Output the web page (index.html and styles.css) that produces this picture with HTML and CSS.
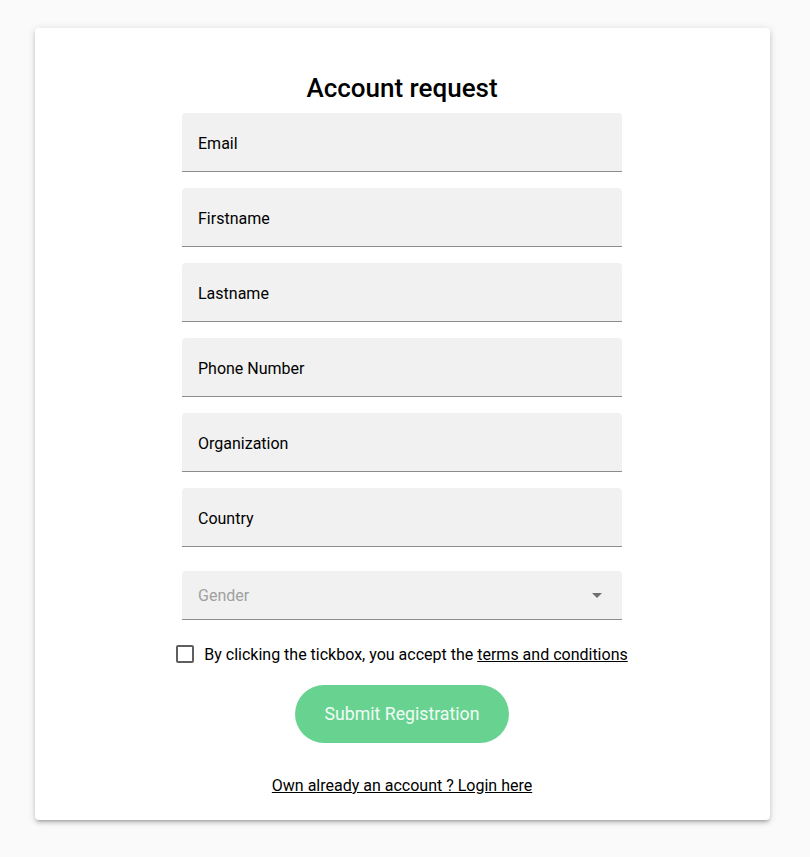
FILE: index.html
```html
<!DOCTYPE html>
<html lang="en">
<head>
<meta charset="utf-8">
<title>Account request</title>
<link rel="stylesheet" href="styles.css">
</head>
<body>
<main class="page">
  <section class="card">
    <h1 class="title">Account request</h1>
    <form class="form">
      <label class="field"><span class="field-label">Email</span></label>
      <label class="field"><span class="field-label">Firstname</span></label>
      <label class="field"><span class="field-label">Lastname</span></label>
      <label class="field"><span class="field-label">Phone Number</span></label>
      <label class="field"><span class="field-label">Organization</span></label>
      <label class="field"><span class="field-label">Country</span></label>
      <div class="field select">
        <span class="placeholder">Gender</span>
        <span class="arrow"></span>
      </div>
    </form>
    <div class="terms">
      <span class="checkbox"></span>
      <span class="terms-text">By clicking the tickbox, you accept the <a href="#" class="link">terms and conditions</a></span>
    </div>
    <button class="submit" type="button">Submit Registration</button>
    <a href="#" class="login link">Own already an account ? Login here</a>
  </section>
</main>
</body>
</html>
```

FILE: styles.css
```css
* { box-sizing: border-box; }
html, body {
  margin: 0;
  padding: 0;
  background: #fafafa;
  font-family: Roboto, "Liberation Sans", Arial, sans-serif;
  color: #000;
}
.page {
  padding: 28px 41px 37px 35px;
}
.card {
  width: 735px;
  height: 792px;
  background: #fff;
  border-radius: 4px;
  box-shadow: 0 3px 3px -2px rgba(0,0,0,0.2), 0 3px 4px 0 rgba(0,0,0,0.14), 0 1px 8px 0 rgba(0,0,0,0.12);
  display: flex;
  flex-direction: column;
  align-items: center;
  padding: 44px 1px 0 0;
}
.title {
  margin: 0 0 9px;
  font-size: 26px;
  line-height: 32px;
  font-weight: 500;
}
.form {
  width: 440px;
  display: flex;
  flex-direction: column;
  gap: 16px;
}
.field {
  display: flex;
  align-items: center;
  height: 59px;
  padding: 0 16px;
  background: #f1f1f1;
  border-radius: 4px 4px 0 0;
  border-bottom: 1px solid #8c8c8c;
  font-size: 16px;
}
.field-label { padding-top: 3px; }
.select {
  margin-top: 8px;
  height: 49px;
  justify-content: space-between;
}
.placeholder {
  color: #a0a0a0;
  padding-top: 1px;
}
.arrow {
  width: 0;
  height: 0;
  border-left: 5px solid transparent;
  border-right: 5px solid transparent;
  border-top: 5px solid #6f6f6f;
  margin-right: 4px;
}
.terms {
  margin-top: 21px;
  display: flex;
  align-items: flex-start;
  gap: 10px;
  font-size: 16px;
  line-height: 24px;
}
.terms-text { padding-top: 2px; }
.checkbox {
  width: 18px;
  height: 18px;
  margin-top: 4px;
  border: 2px solid #5f5f5f;
  border-radius: 2px;
}
.link {
  color: #000;
  text-decoration: underline;
}
.submit {
  margin-top: 18px;
  width: 214px;
  height: 58px;
  border: none;
  border-radius: 29px;
  background: #68d391;
  color: #f2fbf5;
  font-family: inherit;
  font-size: 17.7px;
  padding: 0;
}
.login {
  margin-top: 31px;
  font-size: 16px;
  line-height: 24px;
}
```
